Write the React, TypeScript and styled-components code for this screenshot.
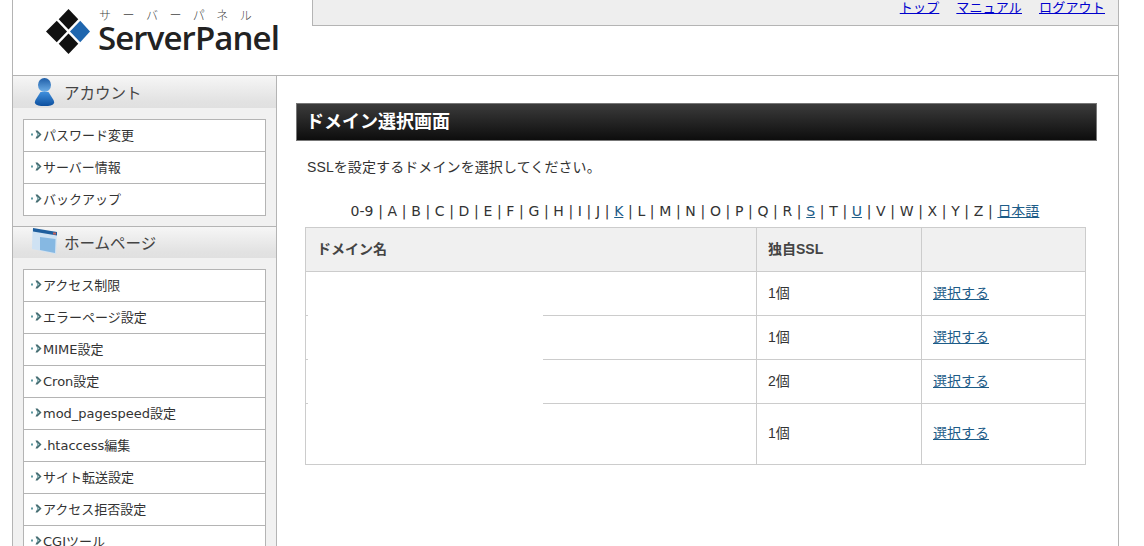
import React from 'react';
import styled, { createGlobalStyle } from 'styled-components';

const GlobalStyle = createGlobalStyle`
  html, body {
    margin: 0;
    padding: 0;
    height: 546px;
    overflow: hidden;
    background: #fff;
  }
  body {
    font-family: "Liberation Sans", "Noto Sans CJK JP", sans-serif;
    font-size: 14px;
    color: #333;
  }
`;

const Wrapper = styled.div`
  width: 1107px;
  margin-left: 12px;
  border-left: 1px solid #b4b4b4;
  border-right: 1px solid #b4b4b4;
  box-sizing: border-box;
`;

const Header = styled.header`
  height: 76px;
  box-sizing: border-box;
  border-bottom: 1px solid #b4b4b4;
  display: flex;
  align-items: flex-start;
`;

const Logo = styled.div`
  width: 299px;
  flex: none;
  display: flex;
  align-items: center;
  gap: 7px;
  padding: 8px 0 0 33px;
  box-sizing: border-box;
`;

const LogoText = styled.div`
  display: flex;
  flex-direction: column;
`;

const LogoKana = styled.span`
  font-family: "Noto Sans CJK JP", sans-serif;
  font-weight: 300;
  font-size: 12px;
  line-height: 14px;
  letter-spacing: 11.5px;
  color: #444;
  padding-left: 1px;
  white-space: nowrap;
`;

const LogoName = styled.span`
  font-family: "Open Sans", sans-serif;
  font-weight: 600;
  font-size: 33px;
  line-height: 32px;
  letter-spacing: -0.9px;
  color: #222;
`;

const TopNav = styled.nav`
  flex: 1;
  height: 26px;
  box-sizing: border-box;
  background: #eeeeee;
  border-left: 1px solid #b4b4b4;
  border-bottom: 1px solid #b4b4b4;
  display: flex;
  justify-content: flex-end;
  gap: 17px;
  padding: 1px 13px 0 0;
`;

const TopLink = styled.a`
  font-size: 13px;
  line-height: 14px;
  letter-spacing: 0.2px;
  color: #0000cc;
  text-decoration: underline;
`;

const Body = styled.div`
  display: flex;
`;

const Sidebar = styled.aside`
  width: 264px;
  flex: none;
  box-sizing: border-box;
  background: #f1f1f1;
  border-right: 1px solid #b4b4b4;
  height: 480px;
  overflow: hidden;
`;

const SectionHead = styled.div<{ $ruled?: boolean }>`
  height: 32px;
  box-sizing: border-box;
  display: flex;
  align-items: center;
  padding: 0 0 ${p => (p.$ruled ? '2px' : '0')} 18px;
  gap: 6px;
  background: linear-gradient(#f6f6f6, #e2e2e2 80%, #e0e0e0);
  border-top: ${p => (p.$ruled ? '1px solid #b4b4b4' : 'none')};
  font-size: 15.5px;
  color: #444;
`;

const SectionIcon = styled.span`
  width: 27px;
  display: flex;
  justify-content: center;
`;

const MenuList = styled.ul`
  list-style: none;
  margin: 11px 10px 10px;
  padding: 0;
  background: #fff;
  border: 1px solid #b4b4b4;
`;

const MenuItem = styled.li`
  height: 32px;
  box-sizing: border-box;
  display: flex;
  align-items: center;
  padding: 0 0 3px 7px;
  font-family: "DejaVu Sans", "Noto Sans CJK JP", sans-serif;
  font-size: 13px;
  color: #333;
  white-space: nowrap;
  &:first-child {
    height: 31px;
  }
  & + & {
    border-top: 1px solid #b4b4b4;
  }
`;

const Main = styled.main`
  flex: 1;
  padding: 27px 21px 0 19px;
`;

const PageTitle = styled.h1`
  margin: 0;
  height: 38px;
  box-sizing: border-box;
  border: 1px solid #777;
  background: linear-gradient(#3b3b3b, #0d0d0d);
  color: #fff;
  font-size: 18px;
  font-weight: bold;
  line-height: 37px;
  padding-left: 9px;
`;

const Lead = styled.p`
  margin: 17px 0 0 11px;
  font-size: 14px;
  line-height: 18px;
  letter-spacing: 0.1px;
`;

const Alphabet = styled.div`
  margin: 26px 0 0 9px;
  width: 780px;
  text-align: center;
  font-family: "DejaVu Sans", "Noto Sans CJK JP", sans-serif;
  font-size: 14px;
  line-height: 18px;
  word-spacing: 0.2px;
  height: 25px;
  color: #333;
`;

const AlphaLink = styled.a`
  color: #1d5c88;
  text-decoration: underline;
`;

const TableWrap = styled.div`
  position: relative;
  margin-left: 9px;
  width: 780px;
`;

const DomainTable = styled.table`
  width: 780px;
  table-layout: fixed;
  border-collapse: collapse;
`;

const HeadCell = styled.th<{ $w: number }>`
  width: ${p => p.$w}px;
  height: 44px;
  box-sizing: border-box;
  padding: 0 11px 4px;
  background: #f0f0f0;
  border: 1px solid #ccc;
  text-align: left;
  font-size: 14px;
  font-weight: bold;
  color: #444;
`;

const Cell = styled.td<{ $h: number }>`
  height: ${p => p.$h}px;
  box-sizing: border-box;
  padding: 0 11px 4px;
  border: 1px solid #ccc;
  font-size: 14px;
  color: #333;
`;

const RowLink = styled.a`
  color: #1d5c88;
  text-decoration: underline;
`;

// blanked-out domain names in the screenshot
const Redaction = styled.div`
  position: absolute;
  left: 3px;
  top: 45px;
  width: 235px;
  height: 191px;
  background: #fff;
`;

const Bullet = () => (
  <svg width="12" height="11" viewBox="0 0 12 11" style={{ flex: 'none' }}>
    <rect x="0" y="4.5" width="2" height="2" fill="#5f98a0" />
    <path d="M4.5 1.5 L6.5 1.5 L10.5 5.5 L6.5 9.5 L4.5 9.5 L6.5 5.5 Z" fill="#41696e" />
    <path d="M5.5 3 L8.5 5.5 L5.5 8 L7 5.5 Z" fill="#a5cfd2" />
  </svg>
);

const LogoMark = () => (
  <svg width="45" height="45" viewBox="0 0 46 46" style={{ flex: 'none' }}>
    <path d="M23 0 L33 10.5 L23 21 L13 10.5 Z" fill="#111" />
    <path d="M11 12 L21.5 23 L11 34 L0 23 Z" fill="#111" />
    <path d="M23 25 L33 35.5 L23 46 L13 35.5 Z" fill="#111" />
    <path d="M35 12 L45 23 L35 34 L24.5 23 Z" fill="#1f66ae" />
  </svg>
);

const PersonIcon = () => (
  <svg width="21" height="28" viewBox="0 0 21 28">
    <defs>
      <linearGradient id="personBody" x1="0" y1="0" x2="0" y2="1">
        <stop offset="0" stopColor="#3f8fdc" />
        <stop offset="1" stopColor="#0d4f9e" />
      </linearGradient>
      <linearGradient id="personHead" x1="0" y1="0" x2="0" y2="1">
        <stop offset="0" stopColor="#1f5ea8" />
        <stop offset="1" stopColor="#6fb0e8" />
      </linearGradient>
    </defs>
    <ellipse cx="10.5" cy="7" rx="6.5" ry="7" fill="url(#personHead)" />
    <path d="M6.5 14 L14.5 14 L19.5 22 Q22 27.5 14 28 L7 28 Q-1 27.5 1.5 22 Z" fill="url(#personBody)" />
  </svg>
);

const PageIcon = () => (
  <svg width="26" height="27" viewBox="0 0 26 27" style={{ marginTop: -1 }}>
    <path d="M0.5 1 L25 6 L24 26 L0 21 Z" fill="#cfe2f3" />
    <path d="M8 9 L23.5 11 L23 25 L8 22 Z" fill="#86b8e2" />
    <path d="M1 0 L25 4 L25 7.5 L1 3.5 Z" fill="#1f5f9e" />
    <rect x="21" y="4.5" width="3" height="2" fill="#c9635a" />
  </svg>
);

const accountItems = ['パスワード変更', 'サーバー情報', 'バックアップ'];
const homepageItems = [
  'アクセス制限',
  'エラーページ設定',
  'MIME設定',
  'Cron設定',
  'mod_pagespeed設定',
  '.htaccess編集',
  'サイト転送設定',
  'アクセス拒否設定',
  'CGIツール',
];

const letters = ['0-9', 'A', 'B', 'C', 'D', 'E', 'F', 'G', 'H', 'I', 'J', 'K', 'L', 'M', 'N', 'O', 'P', 'Q', 'R', 'S', 'T', 'U', 'V', 'W', 'X', 'Y', 'Z'];
const linked = ['K', 'S', 'U'];

const rows = [
  { count: '1個', h: 44 },
  { count: '1個', h: 44 },
  { count: '2個', h: 44 },
  { count: '1個', h: 61 },
];

export default function App() {
  return (
    <>
      <GlobalStyle />
      <Wrapper>
        <Header>
          <Logo>
            <LogoMark />
            <LogoText>
              <LogoKana>サーバーパネル</LogoKana>
              <LogoName>ServerPanel</LogoName>
            </LogoText>
          </Logo>
          <TopNav>
            <TopLink href="#">トップ</TopLink>
            <TopLink href="#">マニュアル</TopLink>
            <TopLink href="#">ログアウト</TopLink>
          </TopNav>
        </Header>
        <Body>
          <Sidebar>
            <SectionHead>
              <SectionIcon><PersonIcon /></SectionIcon>
              アカウント
            </SectionHead>
            <MenuList>
              {accountItems.map(item => (
                <MenuItem key={item}><Bullet />{item}</MenuItem>
              ))}
            </MenuList>
            <SectionHead $ruled>
              <SectionIcon><PageIcon /></SectionIcon>
              ホームページ
            </SectionHead>
            <MenuList>
              {homepageItems.map(item => (
                <MenuItem key={item}><Bullet />{item}</MenuItem>
              ))}
            </MenuList>
          </Sidebar>
          <Main>
            <PageTitle>ドメイン選択画面</PageTitle>
            <Lead>SSLを設定するドメインを選択してください。</Lead>
            <Alphabet>
              {letters.map(l => (
                <React.Fragment key={l}>
                  {linked.includes(l) ? <AlphaLink href="#">{l}</AlphaLink> : l}
                  {' | '}
                </React.Fragment>
              ))}
              <AlphaLink href="#">日本語</AlphaLink>
            </Alphabet>
            <TableWrap>
              <DomainTable>
                <thead>
                  <tr>
                    <HeadCell $w={451}>ドメイン名</HeadCell>
                    <HeadCell $w={165}>独自SSL</HeadCell>
                    <HeadCell $w={164} />
                  </tr>
                </thead>
                <tbody>
                  {rows.map((row, i) => (
                    <tr key={i}>
                      <Cell $h={row.h} />
                      <Cell $h={row.h}>{row.count}</Cell>
                      <Cell $h={row.h}><RowLink href="#">選択する</RowLink></Cell>
                    </tr>
                  ))}
                </tbody>
              </DomainTable>
              <Redaction />
            </TableWrap>
          </Main>
        </Body>
      </Wrapper>
    </>
  );
}
